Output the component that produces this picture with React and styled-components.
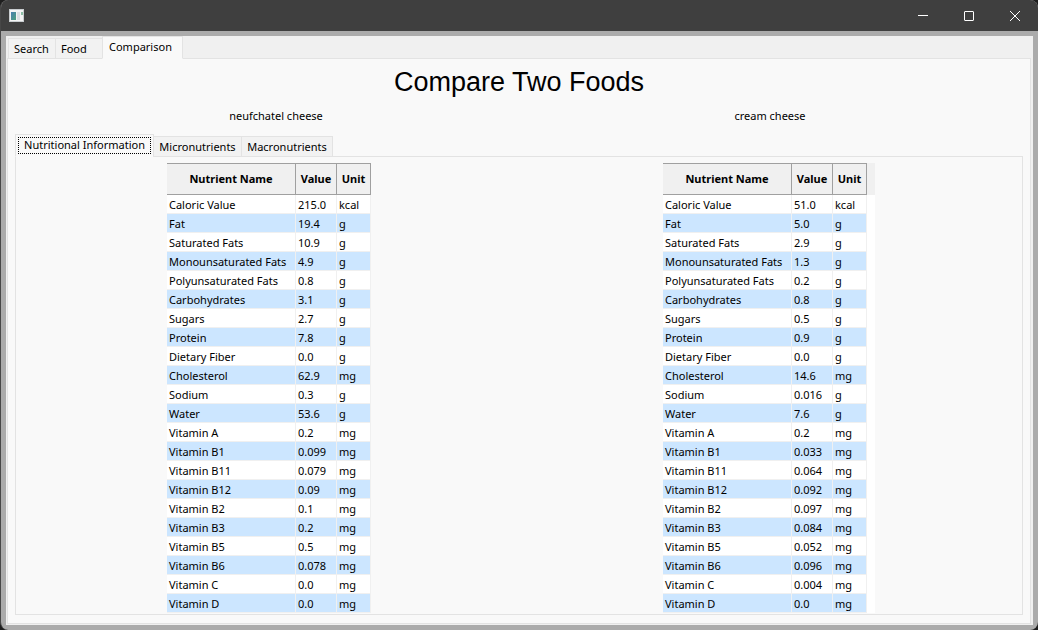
import React, { useState } from "react";
import styled, { createGlobalStyle } from "styled-components";

const GlobalStyle = createGlobalStyle`
  *, *::before, *::after { box-sizing: border-box; }
  body {
    margin: 0;
    background: #1e1e1e;
    color: #000;
    font: 11px/16px "Noto Sans", "Open Sans", sans-serif;
  }
`;

const Window = styled.div`
  display: flex;
  flex-direction: column;
  min-height: 100vh;
  border-left: 1px solid #474747;
  border-radius: 8px;
  overflow: hidden;
  background: #ababab;
`;

const TitleBar = styled.header`
  display: flex;
  align-items: center;
  justify-content: space-between;
  height: 31px;
  padding-left: 8px;
  background: #3f3f3f;
`;

const Controls = styled.div`
  display: flex;
`;

const ControlButton = styled.button`
  display: grid;
  place-items: center;
  width: 46px;
  height: 31px;
  padding: 0;
  border: 0;
  background: none;
  color: #fff;
`;

const Client = styled.main`
  flex: 1;
  display: flex;
  flex-direction: column;
  margin: 5px;
  padding: 0 2px 1px 1px;
  background: #f0f0f0;
`;

const TabList = styled.div`
  display: flex;
  align-items: flex-end;
  margin-bottom: -1px;
`;

const WindowTabs = styled(TabList)`
  padding-left: 1px;
`;

const Tab = styled.button`
  position: relative;
  width: ${(p) => p.$width}px;
  height: ${(p) => (p.$active ? "23px" : "21px")};
  margin: 0 0 0 -1px;
  padding: ${(p) => (p.$active ? "0 6px 2px" : "1px 5px 0")};
  border: 1px solid #e3e3e3;
  border-bottom-color: ${(p) => (p.$active ? "#f9f9f9" : "#e3e3e3")};
  background: ${(p) => (p.$active ? "#f9f9f9" : "#f2f2f2")};
  color: inherit;
  font: inherit;
  text-align: left;
  white-space: nowrap;

  &:first-child { margin-left: 0; }
`;

const SectionTab = styled(Tab)`
  padding-left: 0;
  padding-right: 0;
  text-align: center;
  outline: ${(p) => (p.$active ? "1px dotted #000" : "none")};
  outline-offset: -4px;
`;

const Pane = styled.section`
  flex: 1;
  display: flex;
  flex-direction: column;
  border: 1px solid #e3e3e3;
  background: #f9f9f9;
`;

const OuterPane = styled(Pane)`
  padding: 0 7px 8px;
`;

const InnerPane = styled(Pane)`
  padding: 6px 3px 1px;
`;

const Title = styled.h1`
  margin: 7px 0 10px;
  font: 27px/32px "Liberation Sans", Arial, sans-serif;
  text-align: center;
`;

const FoodNames = styled.div`
  display: grid;
  grid-template-columns: 1fr 1fr;
  padding: 0 6px 0 14px;
  margin-bottom: 10px;
  text-align: center;
`;

const FoodName = styled.p`
  margin: 0;
`;

const Tables = styled.div`
  display: grid;
  grid-template-columns: 1fr 1fr;
  justify-items: center;
`;

const TableView = styled.div`
  padding-right: ${(p) => (p.$gutter ? "8px" : "0")};
  background: linear-gradient(#f0f0f0 32px, #fff 32px);
`;

const Table = styled.table`
  table-layout: fixed;
  width: 204px;
  border-collapse: separate;
  border-spacing: 0;
`;

const Col = styled.col`
  width: ${(p) => p.$width}px;
`;

const HeadCell = styled.th`
  height: 32px;
  padding: 0;
  border: solid #a0a0a0;
  border-width: 1px 1px 1px 0;
  background: #f0f0f0;
  white-space: nowrap;
`;

const Row = styled.tr`
  background: #fff;
  &:nth-child(even) { background: #cce6ff; }
`;

const Cell = styled.td`
  height: 19px;
  padding: 2px 0 0 2px;
  border: solid #f0f0f0;
  border-width: 0 1px 1px 0;
  white-space: nowrap;
`;

const names = [
  "Caloric Value", "Fat", "Saturated Fats", "Monounsaturated Fats",
  "Polyunsaturated Fats", "Carbohydrates", "Sugars", "Protein",
  "Dietary Fiber", "Cholesterol", "Sodium", "Water", "Vitamin A",
  "Vitamin B1", "Vitamin B11", "Vitamin B12", "Vitamin B2", "Vitamin B3",
  "Vitamin B5", "Vitamin B6", "Vitamin C", "Vitamin D",
];

const units = ["kcal", "g", "g", "g", "g", "g", "g", "g", "g", "mg", "g", "g"];

const foods = [
  {
    name: "neufchatel cheese",
    values: [
      "215.0", "19.4", "10.9", "4.9", "0.8", "3.1", "2.7", "7.8", "0.0",
      "62.9", "0.3", "53.6", "0.2", "0.099", "0.079", "0.09", "0.1", "0.2",
      "0.5", "0.078", "0.0", "0.0",
    ],
  },
  {
    name: "cream cheese",
    gutter: true,
    values: [
      "51.0", "5.0", "2.9", "1.3", "0.2", "0.8", "0.5", "0.9", "0.0",
      "14.6", "0.016", "7.6", "0.2", "0.033", "0.064", "0.092", "0.097",
      "0.084", "0.052", "0.096", "0.004", "0.0",
    ],
  },
];

function NutrientTable({ food }) {
  return (
    <TableView $gutter={food.gutter}>
      <Table aria-label={food.name}>
        <colgroup>
          <Col $width={129} />
          <Col $width={41} />
          <Col $width={34} />
        </colgroup>
        <thead>
          <tr>
            <HeadCell scope="col">Nutrient Name</HeadCell>
            <HeadCell scope="col">Value</HeadCell>
            <HeadCell scope="col">Unit</HeadCell>
          </tr>
        </thead>
        <tbody>
          {names.map((name, i) => (
            <Row key={name}>
              <Cell>{name}</Cell>
              <Cell>{food.values[i]}</Cell>
              <Cell>{units[i] || "mg"}</Cell>
            </Row>
          ))}
        </tbody>
      </Table>
    </TableView>
  );
}

function AppIcon() {
  return (
    <svg width="15" height="13" viewBox="0 0 15 13" aria-hidden="true">
      <defs>
        <linearGradient id="screen" x1="0" y1="0" x2="1" y2="1">
          <stop offset="0" stopColor="#4a7fb0" />
          <stop offset="1" stopColor="#4fa07c" />
        </linearGradient>
      </defs>
      <rect x="0.5" y="0.5" width="14" height="12" fill="#f4f4f4" stroke="#c9cdd0" />
      <rect x="2" y="3" width="5" height="8" fill="url(#screen)" />
      <rect x="8" y="3" width="3" height="8" fill="#dcdfe2" />
      <rect x="12" y="3" width="2" height="3" fill="#8dbfa6" />
    </svg>
  );
}

const sections = [
  { label: "Nutritional Information", width: 139 },
  { label: "Micronutrients", width: 89 },
  { label: "Macronutrients", width: 92 },
];

export default function App() {
  const [selected, setSelected] = useState(0);
  return (
    <>
      <GlobalStyle />
      <Window>
        <TitleBar>
          <AppIcon />
          <Controls>
            <ControlButton aria-label="Minimize">
              <svg width="10" height="10" viewBox="0 0 10 10">
                <path d="M0 4.5H10" stroke="currentColor" />
              </svg>
            </ControlButton>
            <ControlButton aria-label="Maximize">
              <svg width="10" height="10" viewBox="0 0 10 10">
                <rect x="0.5" y="0.5" width="9" height="9" rx="0.5" fill="none" stroke="currentColor" />
              </svg>
            </ControlButton>
            <ControlButton aria-label="Close">
              <svg width="10" height="10" viewBox="0 0 10 10">
                <path d="M0 0L10 10M10 0L0 10" stroke="currentColor" />
              </svg>
            </ControlButton>
          </Controls>
        </TitleBar>
        <Client>
          <WindowTabs role="tablist">
            <Tab role="tab" $width={48}>Search</Tab>
            <Tab role="tab" $width={48}>Food</Tab>
            <Tab role="tab" $width={81} $active aria-selected="true">Comparison</Tab>
          </WindowTabs>
          <OuterPane>
            <Title>Compare Two Foods</Title>
            <FoodNames>
              {foods.map((food) => (
                <FoodName key={food.name}>{food.name}</FoodName>
              ))}
            </FoodNames>
            <TabList role="tablist">
              {sections.map((section, i) => (
                <SectionTab
                  key={section.label}
                  role="tab"
                  aria-selected={i === selected}
                  $active={i === selected}
                  $width={section.width}
                  onClick={() => setSelected(i)}
                >
                  {section.label}
                </SectionTab>
              ))}
            </TabList>
            <InnerPane>
              <Tables>
                {foods.map((food) => (
                  <NutrientTable key={food.name} food={food} />
                ))}
              </Tables>
            </InnerPane>
          </OuterPane>
        </Client>
      </Window>
    </>
  );
}
